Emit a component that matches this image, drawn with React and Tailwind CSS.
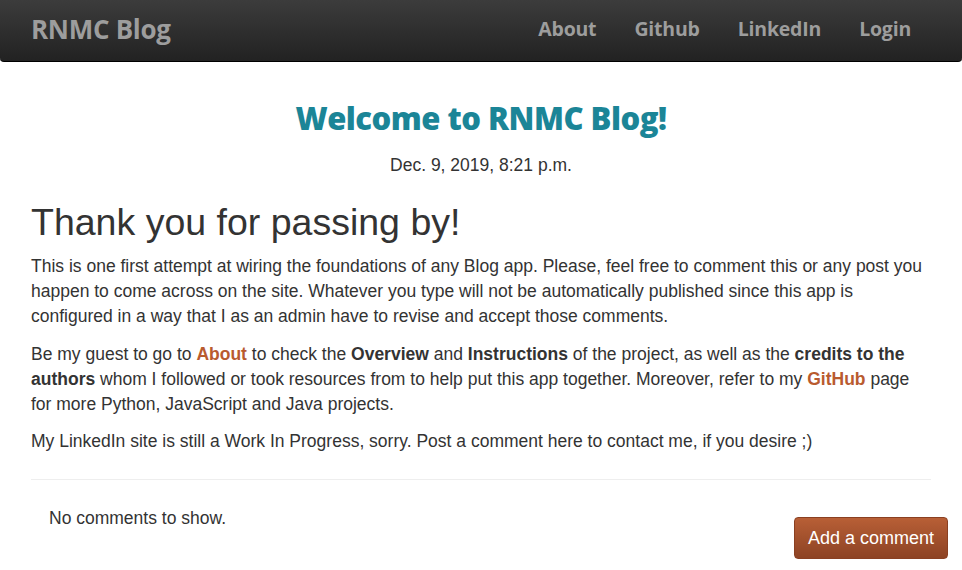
export default function App() {
  return (
    <div className="min-h-[570px] bg-white font-['Liberation_Sans',Arial,sans-serif] text-[#333]">
      {/* Navbar */}
      <nav className="h-[62px] bg-gradient-to-b from-[#3c3c3c] to-[#222] border-b border-black rounded-b-[4px] flex items-center justify-between px-[31px] pb-[3px]">
        <span className="font-['Open_Sans',sans-serif] font-bold text-[26px] text-[#9d9d9d] tracking-[-0.3px]">
          RNMC Blog
        </span>
        <div className="flex items-center gap-[38px] pr-[20px] font-['Open_Sans',sans-serif] font-bold text-[19.5px] text-[#9d9d9d] tracking-[-0.2px]">
          <span>About</span>
          <span>Github</span>
          <span>LinkedIn</span>
          <span>Login</span>
        </div>
      </nav>

      <main className="px-[31px]">
        <h1 className="mt-[36px] text-center font-['Open_Sans',sans-serif] font-extrabold text-[31px] leading-[40px] text-[#1b8597] tracking-[-0.5px]">
          Welcome to RNMC Blog!
        </h1>
        <p className="mt-[15px] text-center text-[17.5px] leading-[24px]">Dec. 9, 2019, 8:21 p.m.</p>

        <h2 className="mt-[23px] text-[37.5px] leading-[44px] mb-[10px]">Thank you for passing by!</h2>

        <div className="text-[17.5px] leading-[25px]">
          <p className="mb-[13px]">
            This is one first attempt at wiring the foundations of any Blog app. Please, feel free to comment this or any
            post you happen to come across on the site. Whatever you type will not be automatically published since this
            app is configured in a way that I as an admin have to revise and accept those comments.
          </p>
          <p className="mb-[12px]">
            Be my guest to go to <a className="font-bold text-[#b95b2f]">About</a> to check the{" "}
            <b>Overview</b> and <b>Instructions</b> of the project, as well as the <b>credits to the</b>{" "}
            <b>authors</b> whom I followed or took resources from to help put this app together. Moreover, refer to my{" "}
            <a className="font-bold text-[#b95b2f]">GitHub</a> page for more Python, JavaScript and Java projects.
          </p>
          <p>My LinkedIn site is still a Work In Progress, sorry. Post a comment here to contact me, if you desire ;)</p>
        </div>

        <hr className="mt-[25px] border-t border-[#eee]" />

        <div className="flex items-start justify-between">
          <p className="mt-[26px] ml-[18px] text-[17.5px] leading-[25px]">No comments to show.</p>
          <button className="mt-[37px] -mr-[17px] h-[42px] px-[13px] rounded-[4px] border border-[#8a4022] bg-gradient-to-b from-[#b85f36] to-[#8d4324] text-white text-[18px]">
            Add a comment
          </button>
        </div>
      </main>
    </div>
  );
}
